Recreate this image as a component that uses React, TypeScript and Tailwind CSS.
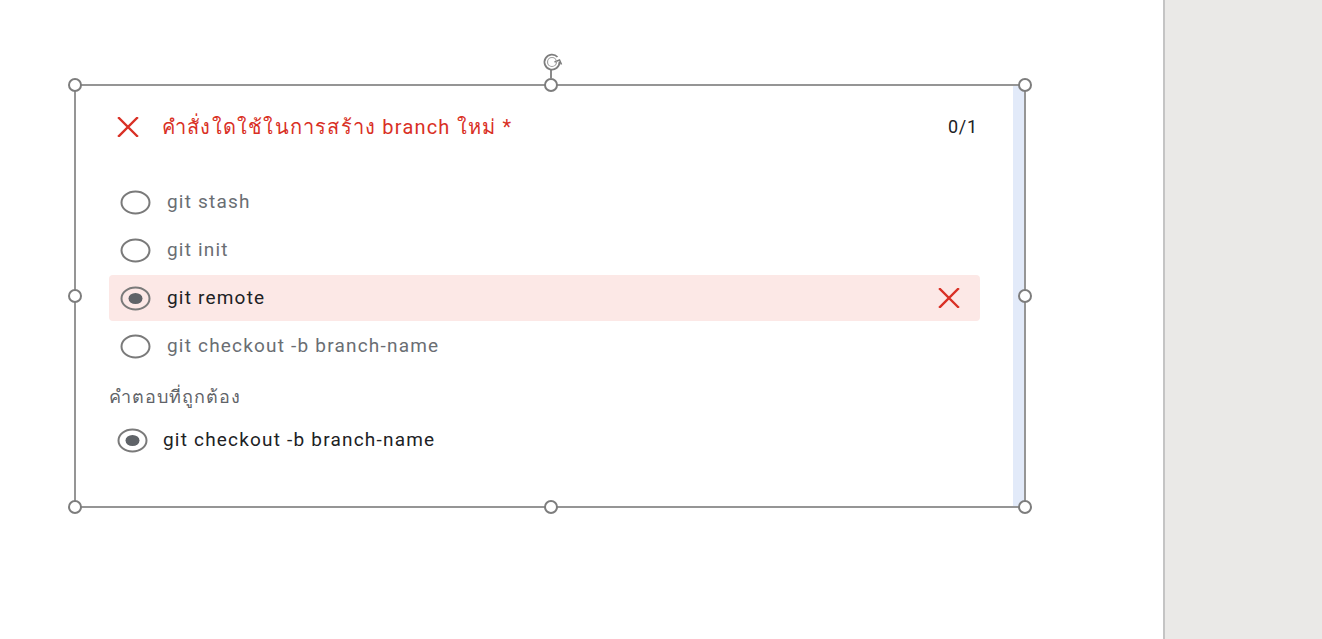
import type { ReactNode } from "react";

const font = { fontFamily: "Roboto, 'Noto Sans', 'DejaVu Sans', sans-serif" };

const Radio = ({ checked }: { checked?: boolean }) => (
  <svg width="31" height="25" viewBox="0 0 31 25" className="shrink-0">
    <ellipse cx="15.5" cy="12.5" rx="14" ry="11" fill="none" stroke="#7a7a7a" strokeWidth="2" />
    {checked && <ellipse cx="15.5" cy="12.5" rx="7" ry="5.5" fill="#5f6368" />}
  </svg>
);

const Cross = ({ size = 22 }: { size?: number }) => (
  <svg width={size} height={size - 2} viewBox="0 0 22 20">
    <path d="M2 1 L20 19 M20 1 L2 19" stroke="#d93025" strokeWidth="2.4" strokeLinecap="square" />
  </svg>
);

const Handle = ({ className }: { className: string }) => (
  <div className={`absolute w-[14px] h-[14px] rounded-full bg-white border-2 border-[#7d7d7d] ${className}`} />
);

type Option = { label: string; picked?: boolean };

const options: Option[] = [
  { label: "git stash" },
  { label: "git init" },
  { label: "git remote", picked: true },
  { label: "git checkout -b branch-name" },
];

const Row = ({ o }: { o: Option }): ReactNode => (
  <div
    className={`h-[46px] flex items-center pl-[11px] pr-[20px] rounded-[4px] ${o.picked ? "bg-[#fce8e6]" : ""}`}
  >
    <Radio checked={o.picked} />
    <span className={`ml-[16px] text-[19px] tracking-[1.2px] ${o.picked ? "text-[#202124]" : "text-[#6a6e73]"}`}>
      {o.label}
    </span>
    {o.picked && (
      <span className="ml-auto">
        <Cross size={22} />
      </span>
    )}
  </div>
);

export default function App() {
  return (
    <div className="w-[1322px] h-[639px] flex bg-white overflow-hidden" style={font}>
      <div className="flex-1 pl-[74px] pt-[84px]">
        <div className="relative w-[952px] h-[424px] border-2 border-[#959595] flex">
          <div className="flex-1 bg-white rounded-br-[10px] pl-[33px] pr-[33px] flex flex-col">
            <div className="h-[80px] flex items-center pl-[8px] pr-[2px] pt-[1px]">
              <Cross size={22} />
              <span className="ml-[23px] text-[20px] text-[#d93025] tracking-[1.2px]">
                คำสั่งใดใช้ในการสร้าง branch ใหม่ *
              </span>
              <span className="ml-auto text-[18px] tracking-[0.8px] text-[#202124]">0/1</span>
            </div>
            <div className="mt-[13px] flex flex-col gap-[2px]">
              {options.map(o => (
                <Row key={o.label} o={o} />
              ))}
            </div>
            <div className="mt-[14px] text-[18px] tracking-[1px] text-[#5f6368]">คำตอบที่ถูกต้อง</div>
            <div className="mt-[16px] flex items-center pl-[8px]">
              <Radio checked />
              <span className="ml-[15px] text-[19px] tracking-[1.2px] text-[#202124]">git checkout -b branch-name</span>
            </div>
          </div>
          <div className="w-[11px] bg-[#e2eaf9]" />

          <Handle className="-left-[8px] -top-[8px]" />
          <Handle className="left-[468px] -top-[8px]" />
          <Handle className="-right-[8px] -top-[8px]" />
          <Handle className="-left-[8px] top-[203px]" />
          <Handle className="-right-[8px] top-[203px]" />
          <Handle className="-left-[8px] -bottom-[8px]" />
          <Handle className="left-[468px] -bottom-[8px]" />
          <Handle className="-right-[8px] -bottom-[8px]" />
          <div className="absolute left-[474px] -top-[16px] w-[2px] h-[9px] bg-[#8a8a8a]" />
          <svg className="absolute left-[465px] -top-[35px]" width="22" height="22" viewBox="0 0 22 22">
            <path d="M16.5 6 A7.5 7.5 0 1 0 18.5 11" fill="none" stroke="#7d7d7d" strokeWidth="1.8" />
            <path d="M13.5 11 L18.5 9 L20.5 13.5" fill="none" stroke="#7d7d7d" strokeWidth="1.6" />
            <circle cx="11" cy="11" r="4.5" fill="none" stroke="#a0a0a0" strokeWidth="1.2" />
          </svg>
        </div>
      </div>
      <div className="w-[159px] h-full bg-[#eae9e7] border-l-2 border-[#c4c4c4]" />
    </div>
  );
}
